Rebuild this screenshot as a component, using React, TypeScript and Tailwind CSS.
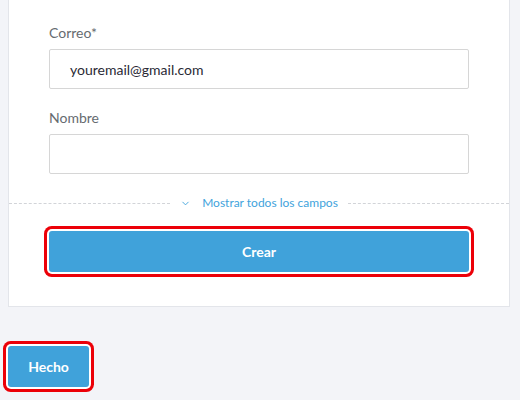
import { ChevronDown } from "lucide-react";

const font = { fontFamily: "Lato, 'Open Sans', sans-serif" };

function Field({ label, value }: { label: string; value?: string }) {
  return (
    <div>
      <div className="text-[14px] leading-5 text-[#666b70] mb-[6px]">{label}</div>
      <div className="h-10 border border-[#d6d6d6] rounded-[2px] px-5 flex items-center text-[14px] text-[#2a2a35]">
        {value}
      </div>
    </div>
  );
}

export default function App() {
  return (
    <div
      className="w-[520px] h-[400px] bg-[#f3f4f8] px-2 overflow-hidden"
      style={font}
    >
      {/* Form card */}
      <div className="w-[502px] bg-white border border-t-0 border-[#e3e5ea] px-10 pt-[23px] pb-[34px]">
        <Field label="Correo*" value="youremail@gmail.com" />
        <div className="mt-[19px]">
          <Field label="Nombre" />
        </div>

        {/* Show all fields */}
        <div className="-mx-10 mt-[20px] flex items-center">
          <div className="flex-1 border-t border-dashed border-[#d2d4d8]" />
          <div className="flex items-center gap-[11px] px-[10px] text-[12px] text-[#3fa3dc]">
            <ChevronDown size={11} strokeWidth={2} />
            <span>Mostrar todos los campos</span>
          </div>
          <div className="flex-1 border-t border-dashed border-[#d2d4d8]" />
        </div>

        <button className="mt-[19px] w-full h-[41px] rounded-[3px] bg-[#40a2da] text-white text-[14px] font-bold ring-[3px] ring-[#ec0008] ring-offset-2 ring-offset-white">
          Crear
        </button>
      </div>

      {/* Done */}
      <button className="mt-[39px] w-[81px] h-[41px] rounded-[3px] bg-[#40a2da] text-white text-[14px] font-bold ring-[3px] ring-[#ec0008] ring-offset-2 ring-offset-white">
        Hecho
      </button>
    </div>
  );
}
